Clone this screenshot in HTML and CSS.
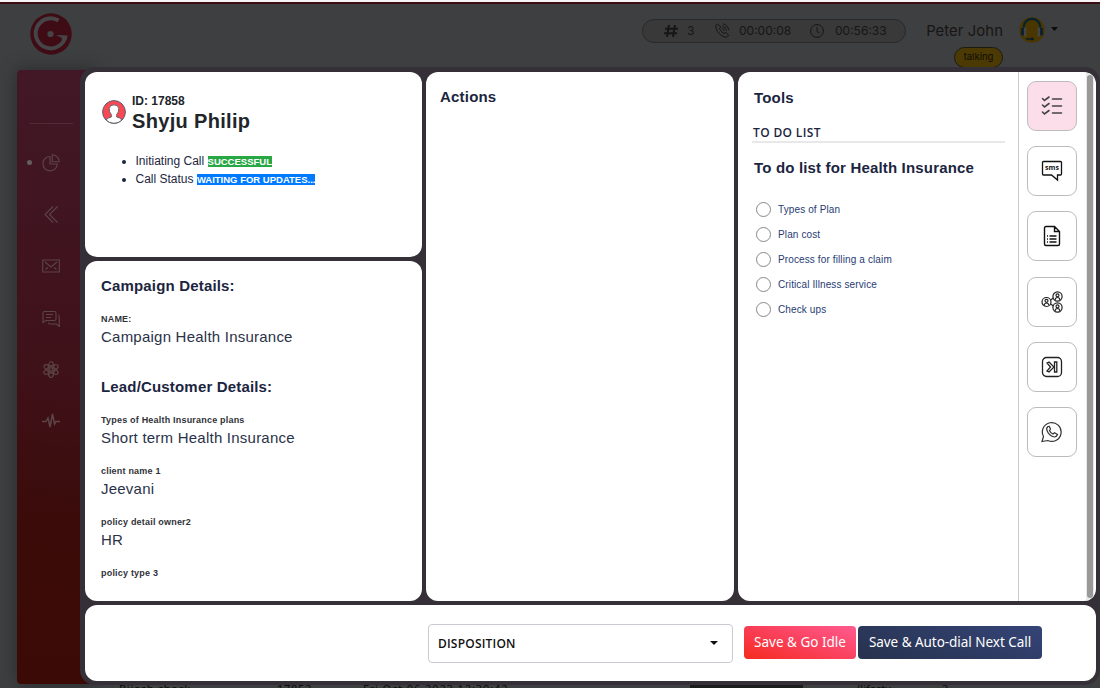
FILE: index.html
```html
<!DOCTYPE html>
<html lang="en">
<head>
<meta charset="utf-8">
<title>Call panel</title>
<link rel="stylesheet" href="styles.css">
</head>
<body>
<div class="page">
  <header class="topbar">
    <svg class="logo" width="42" height="42" viewBox="0 0 42 42">
      <circle cx="21" cy="21" r="20.700" fill="#3f0b14"/>
      <path d="M28.500 7.500A15 15 0 1 0 35.500 23" fill="none" stroke="#454446" stroke-width="4"/>
      <path d="M26 22L37.500 22.500Q37 26 35.500 28.500L31.500 27.500L32 25Z" fill="#454446"/>
      <circle cx="20.500" cy="21" r="3.100" fill="#454446"/>
    </svg>
    <div class="stats">
      <svg class="hash" width="14" height="12" viewBox="0 0 14 12"><path d="M5 0L3 12M11 0L9 12M1 3.700H14M0 8.300H13" fill="none" stroke="#161616" stroke-width="2"/></svg>
      <span class="stat-count">3</span>
      <svg class="phone" width="15" height="15" viewBox="0 0 15 15" fill="none" stroke="#161616"><path d="M2.500.8L.9 2.500C-.2 7 6.500 14.500 11.500 14.200L13.700 12.500L10.800 9.300L9 10.500C7.500 9.800 5.500 7.800 4.500 5.700L5.700 4Z"/><path d="M7 5.500Q9 6 9.400 8M7.300 3.200Q10.800 3.800 11.600 7.600M7.700.8Q12.700 1.700 13.800 7.200"/></svg>
      <span class="stat-time">00:00:08</span>
      <svg class="clock" width="14" height="14" viewBox="0 0 14 14" fill="none" stroke="#161616"><circle cx="7" cy="7" r="6.400"/><path d="M7 3V7.500L9.500 9"/></svg>
      <span class="stat-total">00:56:33</span>
    </div>
    <div class="user"><span class="user-name">Peter John</span><span class="status">talking</span></div>
    <svg class="agent" width="26" height="26" viewBox="0 0 26 26">
      <circle cx="13" cy="13" r="12.800" fill="#4a3600"/>
      <path d="M5 12C3 -1.500 23 -1.500 21 12" fill="none" stroke="#06222f" stroke-width="2.200"/>
      <path d="M6 10.500V19.500M20 10.500V19.500" stroke="#444" stroke-width="2.800"/>
      <path d="M3.500 11V18.500M22.500 11V18.500" stroke="#061d38" stroke-width="2.500"/>
      <path d="M7 22H15M13 20.500V23.500" stroke="#071b28" stroke-width="1.500"/>
    </svg>
    <span class="user-caret"></span>
  </header>

  <nav class="sidebar">
    <div class="divider"></div>
    <div class="nav-item active"><svg width="18" height="18" viewBox="0 0 18 18"><path d="M8 2.500A7.200 7.200 0 1 0 15.300 10H8ZM10.200.8V7.700H17.200A7 7 0 0 0 10.200.8Z"/></svg></div>
    <div class="nav-item"><svg width="18" height="18" viewBox="0 0 18 18"><path d="M11 1.500L3 9.500L11 17.500M15.500 1.500L7.500 9.500L15.500 17.500"/></svg></div>
    <div class="nav-item"><svg width="18" height="18" viewBox="0 0 18 18"><path d="M.7 3H17.300V15H.7ZM3 5L9 10L15 5M3.500 12.500L6 10.500M14.500 12.500L12 10.500"/></svg></div>
    <div class="nav-item"><svg width="18" height="18" viewBox="0 0 18 18"><path d="M1 13.500V4Q1 2.500 2.500 2.500H12.500Q14 2.500 14 4V10Q14 11.500 12.500 11.500H4ZM4 5.500H11M4 8.500H9M16 6Q17.300 6 17.300 8V17.500L14.500 15H8Q6.500 15 6.500 13.500"/></svg></div>
    <div class="nav-item"><svg width="18" height="18" viewBox="0 0 18 18"><ellipse cx="9" cy="9.500" rx="3" ry="8"/><ellipse cx="9" cy="9.500" rx="3" ry="8" transform="rotate(60 9 9.500)"/><ellipse cx="9" cy="9.500" rx="3" ry="8" transform="rotate(-60 9 9.500)"/><circle cx="9" cy="9.500" r="1.700"/></svg></div>
    <div class="nav-item"><svg width="18" height="18" viewBox="0 0 18 18"><path d="M0 9.500H4L6 6L8 15L10.500 2L12.500 12L14 9.500H18" stroke-width="1.500"/></svg></div>
  </nav>

  <div class="table-row"><span class="cell-name">Bijesh check</span><span class="cell-id">17852</span><span class="cell-date">Fri Oct 06 2023 12:39:42</span><span class="cell-bar"></span><span class="cell-state">(lifesty...</span><span>3</span></div>

  <main class="modal">
    <section class="card person">
      <div class="person-head">
        <svg width="24" height="24" viewBox="0 0 24 24">
          <circle cx="12" cy="12" r="11.400" fill="#f84851" stroke="#536071"/>
          <path d="M4 20Q6 17.500 9.300 17V14.500Q7 12 7.200 8.500Q7.600 4.800 12 4.800Q16.400 4.800 16.800 8.500Q17 12 14.700 14.500V17Q18 17.500 20 20Q16.500 23.300 12 23.300Q7.500 23.300 4 20Z" fill="#fff" stroke="#69616c"/>
        </svg>
        <div><div class="person-id">ID: 17858</div><div class="person-name">Shyju Philip</div></div>
      </div>
      <ul class="call-log">
        <li><span class="log-text">Initiating Call</span> <span class="tag green">SUCCESSFUL</span></li>
        <li><span class="log-text">Call Status</span> <span class="tag blue">WAITING FOR UPDATES...</span></li>
      </ul>
    </section>

    <section class="card details">
      <h2>Campaign Details:</h2>
      <div class="field"><div class="label upper">NAME:</div><div class="value">Campaign Health Insurance</div></div>
      <h2 class="lead">Lead/Customer Details:</h2>
      <div class="field"><div class="label">Types of Health Insurance plans</div><div class="value">Short term Health Insurance</div></div>
      <div class="field"><div class="label">client name 1</div><div class="value">Jeevani</div></div>
      <div class="field"><div class="label">policy detail owner2</div><div class="value">HR</div></div>
      <div class="field"><div class="label">policy type 3</div></div>
    </section>

    <section class="card actions"><h2>Actions</h2></section>

    <section class="card tools">
      <div class="tools-main">
        <h2>Tools</h2>
        <h3>TO DO LIST</h3>
        <h2 class="todo-title">To do list for Health Insurance</h2>
        <div class="todo"><i></i><span>Types of Plan</span></div>
        <div class="todo"><i></i><span>Plan cost</span></div>
        <div class="todo"><i></i><span>Process for filling a claim</span></div>
        <div class="todo"><i></i><span>Critical Illness service</span></div>
        <div class="todo"><i></i><span>Check ups</span></div>
      </div>
      <div class="tool-tabs">
        <div class="tab selected"><svg width="22" height="22" viewBox="0 0 22 22" fill="none" stroke="#444" stroke-width="1.600" stroke-linecap="round"><path d="M1.500 3.500L3.500 5.500L8 2M1.500 10L3.500 12L8 8.500M1.500 17L3.500 19L8 15.500M11.500 4H20.500M11.500 11H20.500M11.500 18H20.500"/></svg></div>
        <div class="tab"><svg width="22" height="22" viewBox="0 0 22 22"><path d="M2.500 1.500H19.500Q20.500 1.500 20.500 2.500V14Q20.500 15 19.500 15H16.500V20L10.500 15H2.500Q1.500 15 1.500 14V2.500Q1.500 1.500 2.500 1.500Z" fill="none" stroke="#111" stroke-width="1.300"/><text x="11" y="10" text-anchor="middle" class="sms">sms</text></svg></div>
        <div class="tab"><svg width="22" height="22" viewBox="0 0 22 22" fill="none" stroke="#111" stroke-width="1.400"><path d="M4.500 1.500H13.500L18.500 6.500V19Q18.500 20.500 17 20.500H5Q3.500 20.500 3.500 19V3Q3.500 1.500 5 1.500M13.500 1.500V6.500H18.500M8.500 11H15.500M8.500 14H15.500M8.500 17H15.500M6 11H7M6 14H7M6 17H7"/></svg></div>
        <div class="tab"><svg width="22" height="22" viewBox="0 0 22 22" fill="none" stroke="#222" stroke-width="1.200"><circle cx="5.500" cy="11" r="4.500"/><circle cx="5.500" cy="9.800" r="1.500"/><path d="M3 14.500Q3.500 12 5.500 12T8 14.500M9.500 9L12.500 7M9.500 13L12.500 15"/><circle cx="16.500" cy="5.500" r="4.600"/><circle cx="16.500" cy="4.300" r="1.500"/><path d="M14 9Q14.300 6.500 16.500 6.500T19 9"/><circle cx="16.500" cy="16.500" r="4.600"/><circle cx="16.500" cy="15.300" r="1.500"/><path d="M14 20Q14.300 17.500 16.500 17.500T19 20"/></svg></div>
        <div class="tab"><svg width="22" height="22" viewBox="0 0 22 22" fill="none" stroke="#222" stroke-width="1.300"><rect x="1.500" y="1.500" width="19" height="19" rx="4"/><path d="M6 7L8 6L13 11L8 16L6 15L9.500 11Z"/><path d="M13.500 6H15.800V16H13.500Z"/></svg></div>
        <div class="tab"><svg width="22" height="22" viewBox="0 0 22 22" fill="none" stroke="#333" stroke-width="1.200"><path d="M1 20.500L2.500 15.500A9.400 9.400 0 1 1 6.800 19.500Z"/><path d="M7 5.500Q5 7 6 9.500Q8 15 13.500 16Q15.500 16 16.500 13.500L13.500 11.700L12 13Q9.500 12 8.500 9.500L9.500 8L8.300 5.300Z"/></svg></div>
      </div>
      <div class="scroll"><div class="thumb"></div></div>
    </section>

    <section class="card footer">
      <div class="select"><span>DISPOSITION</span><i class="caret"></i></div>
      <button class="btn idle"><span>Save &amp; Go Idle</span></button>
      <button class="btn next"><span>Save &amp; Auto-dial Next Call</span></button>
    </section>
  </main>
</div>
</body>
</html>
```
FILE: styles.css
```css
* { box-sizing: border-box; }
body { margin: 0; font-family: "Liberation Sans", Arial, sans-serif; color: #1c2540; }
.page { position: relative; width: 1100px; height: 688px; overflow: hidden; background: #3e3f40; border-top: 2px solid #f7f4f5; white-space: nowrap; }
.page svg { display: block; flex: none; }

.topbar { display: flex; height: 68px; padding-left: 30px; border-top: 2px solid #3c0d14; font-family: "Open Sans", sans-serif; color: #161616; }
.logo { margin-top: 9px; }
.stats { display: flex; align-items: center; width: 264px; height: 24px; margin: 14.500px 0 0 570px; padding-left: 21px; border: 1px solid #292929; border-radius: 12px; background: #393939; font-family: Inter, sans-serif; font-size: 12px; }
.stat-count { margin-left: 9px; width: 28px; }
.stat-time { margin-left: 9px; width: 71px; }
.stat-total { margin-left: 11px; }
.user { display: flex; flex-direction: column; align-items: flex-end; width: 77px; margin: 17px 0 0 20px; }
.user-name { font: 14.800px/20px Inter, sans-serif; letter-spacing: .1px; }
.status { width: 49px; height: 21px; margin-top: 6px; border: 1px solid #1d1a10; border-radius: 11px; background: #4c3a04; font: 9.500px/18px Inter, sans-serif; text-align: center; color: #100c02; }
.agent { margin: 13px 0 0 16px; }
.user-caret { margin: 23px 0 0 6px; width: 7px; height: 4px; background: #0c0c0c; clip-path: polygon(0 0, 100% 0, 50% 100%); }

.sidebar { width: 80px; height: 614px; margin-left: 17px; border-radius: 4px; background: linear-gradient(184deg, #421827, #3f1119 49%, #3b0b09 75%, #3b0a05); box-shadow: 0 0 18px rgba(0,0,0,.35); display: flex; flex-direction: column; }
.divider { width: 43px; height: 1px; margin: 53px 0 13px 13px; background: #542c38; flex: none; }
.nav-item { display: flex; align-items: center; height: 51.600px; padding-left: 25px; }
.nav-item svg { fill: none; stroke: #5d4547; stroke-width: 1.1; }
.active { padding-left: 10px; }
.active::before { content: ""; width: 5px; height: 5px; margin-right: 10px; border-radius: 50%; background: #625e5e; }

.table-row { display: flex; margin-top: -2px; padding-left: 119px; font: 11px/14px "Noto Sans", sans-serif; color: #0c0c0c; }
.cell-name { width: 158px; }
.cell-id { width: 86px; }
.cell-date { width: 327px; letter-spacing: .9px; }
.cell-id, .cell-name { letter-spacing: .7px; }
.cell-bar { width: 113px; height: 9px; margin-top: 1px; background: #1b1b1b; }
.cell-state { width: 85px; margin-left: 54px; }

.modal { position: absolute; left: 80px; top: 65px; width: 1020px; height: 618px; padding: 5px 4px 4px 5px; background: #352f37; border-radius: 15px; display: grid; grid-template-columns: 337px 308px 358px; grid-template-rows: 185px 340px 76px; gap: 4px; }
.card { background: #fff; border-radius: 12px; overflow: hidden; min-width: 0; }
h2 { margin: 0; font-size: 15px; line-height: 20px; letter-spacing: .17px; }
.actions h2 { letter-spacing: .2px; }
.person { padding: 21px 16.500px; color: #212529; }
.person-head { display: flex; gap: 6.500px; }
.person-head svg { margin-top: 7px; }
.person-id { font: bold 12px/16px "Liberation Sans", sans-serif; }
.person-name { font: bold 20px/24px "Liberation Sans", sans-serif; letter-spacing: .33px; }
.call-log { margin: 19px 0 0; padding-left: 34px; font-size: 12px; line-height: 18px; color: #1c2540; }
.tag { display: inline-block; height: 11px; color: #fff; font-size: 9.500px; font-weight: bold; line-height: 11px; }
.green { background: #28a745; }
.blue { background: #007bff; }

.details { padding: 15px 16px; }
.field { height: 51px; }
.details h2 { margin-bottom: 15px; }
.details .lead { margin: 15px 0 15px; }
.label { font-size: 9px; font-weight: bold; line-height: 16px; color: #303238; letter-spacing: .2px; }
.value { font-size: 15px; line-height: 20px; color: #2a3248; letter-spacing: .23px; }

.actions { grid-column: 2; grid-row: 1 / 3; padding: 15px 14px; }
.tools { grid-column: 3; grid-row: 1 / 3; display: flex; }
.tools-main { width: 281px; padding: 16px 13px 16px 14px; border-right: 1px solid #ccc; }
.tools-main h2 { padding-left: 2px; }
h3 { margin: 16px 0 15px; height: 19px; border-bottom: 2px solid #e8e8e8; font: 600 12px/18px "Open Sans", sans-serif; letter-spacing: .35px; padding-left: 1px; }
.tools-main .todo-title { margin-bottom: 19px; }
.todo { display: flex; align-items: center; height: 25px; padding-left: 4px; gap: 7px; font-size: 10px; color: #273b73; letter-spacing: .12px; }
.todo i { width: 15px; height: 15px; border: 1px solid #888; border-radius: 50%; }
.tool-tabs { display: flex; flex-direction: column; gap: 15.400px; padding: 8.500px 8px; }
.tab { display: grid; place-items: center; width: 50px; height: 50px; flex: none; border: 1px solid #bcbcbc; border-radius: 9px; }
.selected { background: #fcdeeb; }
.sms { font: bold 7px "Open Sans", sans-serif; fill: #111; }
.scroll { width: 8px; margin: 1px 0 0 1px; background: #e9e9e9; }
.thumb { width: 6px; height: 523px; margin: 2px 1px; border-radius: 3px; background: #999; }

.footer { grid-column: 1 / 4; display: flex; align-items: center; padding-left: 343px; }
.select { display: flex; align-items: center; width: 305px; height: 39px; margin-right: 11px; padding: 0 14px 0 9px; justify-content: space-between; border: 1px solid #c9c9d2; border-radius: 4px; font: 600 12px "Open Sans", sans-serif; letter-spacing: .2px; color: #111; }
.caret { width: 8px; height: 4px; background: #111; clip-path: polygon(0 0, 100% 0, 50% 100%); }
.btn { height: 33px; margin-top: -1px; padding: 0; border: 0; border-radius: 4px; color: #fff; font: 13.500px/33px "Noto Sans", sans-serif; }
.idle { width: 112px; margin-right: 2px; background: linear-gradient(20deg, #f52b1e, #fa405b 50%, #ff5c90); }
.next { width: 184px; background: linear-gradient(20deg, #27324d, #344477); letter-spacing: -.04px; }
```
